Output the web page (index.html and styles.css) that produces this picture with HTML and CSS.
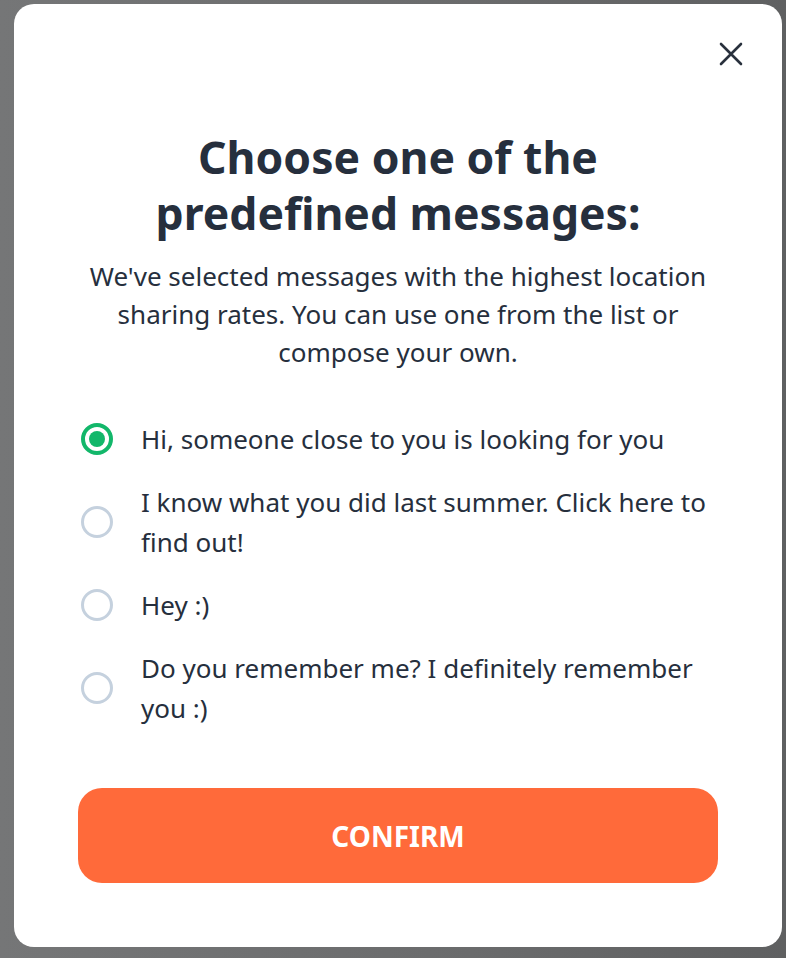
FILE: index.html
```html
<!DOCTYPE html>
<html lang="en">
<head>
<meta charset="utf-8">
<title>Choose a message</title>
<link rel="stylesheet" href="styles.css">
</head>
<body>
<div class="backdrop">
  <div class="modal">
    <button class="close" aria-label="Close">
      <svg width="24" height="24" viewBox="0 0 24 24"><path d="M2 2 L22 22 M22 2 L2 22" stroke="#29313d" stroke-width="2.6" stroke-linecap="round" fill="none"/></svg>
    </button>
    <h1 class="title">Choose one of the<br>predefined messages:</h1>
    <p class="subtitle">We've selected messages with the highest location sharing rates. You can use one from the list or compose your own.</p>
    <ul class="options">
      <li class="option selected"><span class="radio"></span><span class="label">Hi, someone close to you is looking for you</span></li>
      <li class="option"><span class="radio"></span><span class="label">I know what you did last summer. Click here to find out!</span></li>
      <li class="option"><span class="radio"></span><span class="label">Hey :)</span></li>
      <li class="option"><span class="radio"></span><span class="label">Do you remember me? I definitely remember you :)</span></li>
    </ul>
    <button class="confirm">CONFIRM</button>
  </div>
</div>
</body>
</html>
```
FILE: styles.css
```css
html, body {
  margin: 0;
  padding: 0;
}
body {
  background: linear-gradient(90deg, #757677 0%, #6a6b6c 60%, #5f6061 100%);
  font-family: "Noto Sans", "Open Sans", sans-serif;
  color: #262f3d;
  width: 786px;
  height: 958px;
  overflow: hidden;
}
.backdrop {
  padding: 4px 4px 0 14px;
}
.modal {
  position: relative;
  width: 768px;
  height: 943px;
  box-sizing: border-box;
  background: #fff;
  border-radius: 20px;
  padding: 125px 64px 0 64px;
}
.close {
  position: absolute;
  top: 38px;
  right: 39px;
  width: 24px;
  height: 24px;
  padding: 0;
  border: 0;
  background: none;
  display: flex;
}
.title {
  margin: 0;
  text-align: center;
  font-size: 44.5px;
  line-height: 56px;
  font-weight: 700;
  color: #262f3d;
}
.subtitle {
  margin: 16px 0 0 0;
  text-align: center;
  font-size: 26px;
  line-height: 38px;
}
.options {
  list-style: none;
  margin: 48px 0 0 0;
  padding: 0;
  display: flex;
  flex-direction: column;
  gap: 23px;
}
.option {
  display: flex;
  align-items: center;
  gap: 28px;
  font-size: 26px;
  line-height: 40px;
}
.radio {
  flex: none;
  width: 32px;
  height: 32px;
  box-sizing: border-box;
  border-radius: 50%;
  border: 3px solid #c5d1de;
  margin-left: 3px;
  position: relative;
}
.option.selected .radio {
  border: 4px solid #12b76a;
}
.option.selected .radio::after {
  content: "";
  position: absolute;
  left: 4px;
  top: 4px;
  width: 16px;
  height: 16px;
  border-radius: 50%;
  background: #12b76a;
}
.label {
  flex: 1;
}
.confirm {
  margin-top: 60px;
  width: 640px;
  height: 95px;
  border: 0;
  border-radius: 24px;
  background: #ff6a3a;
  color: #fff;
  font-family: "Noto Sans", "Open Sans", sans-serif;
  font-weight: 700;
  font-size: 28px;
  display: block;
}
```
